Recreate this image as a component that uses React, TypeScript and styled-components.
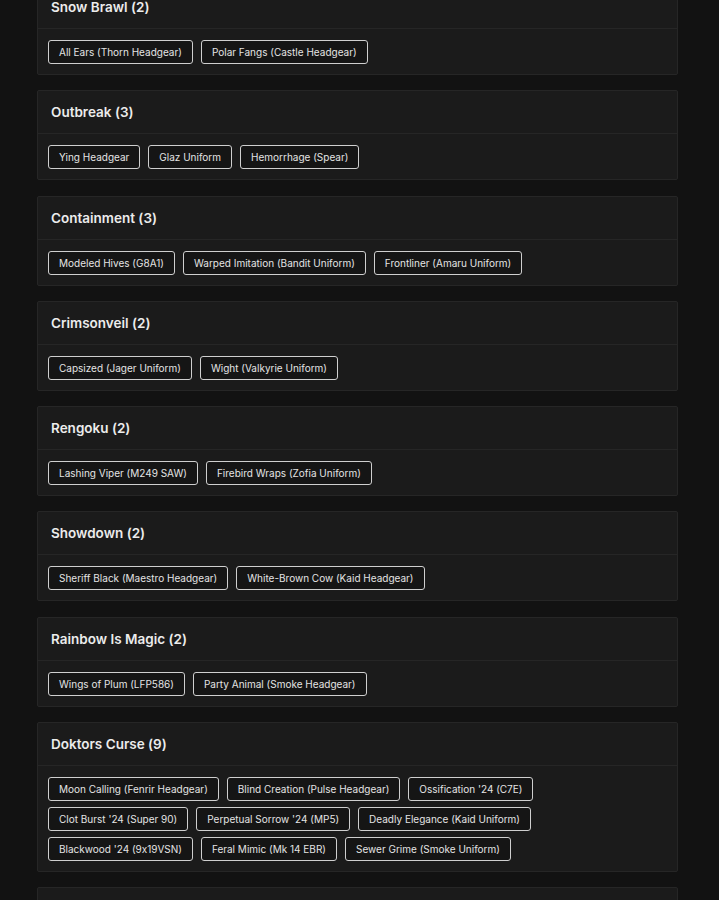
import React from "react";
import styled, { createGlobalStyle } from "styled-components";

const Global = createGlobalStyle`
  html, body { margin: 0; padding: 0; background: #121212; }
  body {
    font-family: Inter, "Noto Sans", sans-serif;
    color: #e6e6e6;
    font-feature-settings: "calt" 0;
  }
`;

const Page = styled.div`
  width: 641px;
  margin: -15px 0 0 37px;
  display: flex;
  flex-direction: column;
  gap: 15.3px;
  padding-bottom: 40px;
`;

const Card = styled.section`
  background: #1b1b1b;
  border: 1px solid #262626;
  border-radius: 2px;
`;

const CardHeader = styled.header`
  height: 42px;
  padding: 0 13px;
  display: flex;
  align-items: center;
  border-bottom: 1px solid #262626;
  font-size: 13.5px;
  font-weight: 600;
  color: #ececec;
`;

const CardBody = styled.div`
  padding: 11px 10px 10px;
  display: flex;
  flex-wrap: wrap;
  gap: 6px 8px;
`;

const Chip = styled.span`
  display: inline-flex;
  align-items: center;
  height: 24px;
  box-sizing: border-box;
  padding: 0 10px;
  border: 1px solid #cfcfcf;
  border-radius: 3px;
  background: #151515;
  font-size: 10px;
  color: #e4e4e4;
  white-space: nowrap;
`;

const events: { name: string; items: string[] }[] = [
  { name: "Snow Brawl", items: ["All Ears (Thorn Headgear)", "Polar Fangs (Castle Headgear)"] },
  { name: "Outbreak", items: ["Ying Headgear", "Glaz Uniform", "Hemorrhage (Spear)"] },
  {
    name: "Containment",
    items: ["Modeled Hives (G8A1)", "Warped Imitation (Bandit Uniform)", "Frontliner (Amaru Uniform)"],
  },
  { name: "Crimsonveil", items: ["Capsized (Jager Uniform)", "Wight (Valkyrie Uniform)"] },
  { name: "Rengoku", items: ["Lashing Viper (M249 SAW)", "Firebird Wraps (Zofia Uniform)"] },
  { name: "Showdown", items: ["Sheriff Black (Maestro Headgear)", "White-Brown Cow (Kaid Headgear)"] },
  { name: "Rainbow Is Magic", items: ["Wings of Plum (LFP586)", "Party Animal (Smoke Headgear)"] },
  {
    name: "Doktors Curse",
    items: [
      "Moon Calling (Fenrir Headgear)",
      "Blind Creation (Pulse Headgear)",
      "Ossification '24 (C7E)",
      "Clot Burst '24 (Super 90)",
      "Perpetual Sorrow '24 (MP5)",
      "Deadly Elegance (Kaid Uniform)",
      "Blackwood '24 (9x19VSN)",
      "Feral Mimic (Mk 14 EBR)",
      "Sewer Grime (Smoke Uniform)",
    ],
  },
  { name: "Sugar Fright", items: ["Candy Corn (Lion Headgear)", "Sweet Tooth (Ela Uniform)"] },
];

export default function App() {
  return (
    <>
      <Global />
      <Page>
        {events.map((e) => (
          <Card key={e.name}>
            <CardHeader>
              {e.name} ({e.items.length})
            </CardHeader>
            <CardBody>
              {e.items.map((it) => (
                <Chip key={it}>{it}</Chip>
              ))}
            </CardBody>
          </Card>
        ))}
      </Page>
    </>
  );
}
